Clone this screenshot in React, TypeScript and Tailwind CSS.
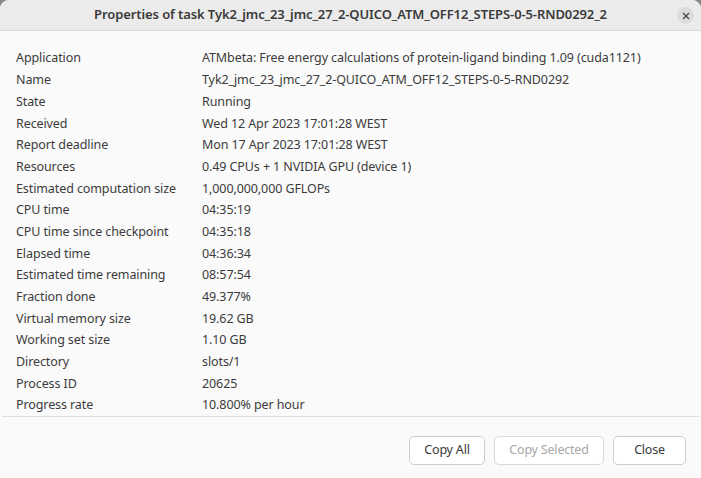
import React from "react";

const rows: [string, string][] = [
  ["Application", "ATMbeta: Free energy calculations of protein-ligand binding 1.09 (cuda1121)"],
  ["Name", "Tyk2_jmc_23_jmc_27_2-QUICO_ATM_OFF12_STEPS-0-5-RND0292"],
  ["State", "Running"],
  ["Received", "Wed 12 Apr 2023 17:01:28 WEST"],
  ["Report deadline", "Mon 17 Apr 2023 17:01:28 WEST"],
  ["Resources", "0.49 CPUs + 1 NVIDIA GPU (device 1)"],
  ["Estimated computation size", "1,000,000,000 GFLOPs"],
  ["CPU time", "04:35:19"],
  ["CPU time since checkpoint", "04:35:18"],
  ["Elapsed time", "04:36:34"],
  ["Estimated time remaining", "08:57:54"],
  ["Fraction done", "49.377%"],
  ["Virtual memory size", "19.62 GB"],
  ["Working set size", "1.10 GB"],
  ["Directory", "slots/1"],
  ["Process ID", "20625"],
  ["Progress rate", "10.800% per hour"],
];

export default function App() {
  return (
    <div
      className="w-[701px] h-[478px] bg-[#8a8a8a] text-[#3c3c3c]"
      style={{ fontFamily: '"Noto Sans", "Open Sans", sans-serif' }}
    >
      <div className="w-full h-full flex flex-col bg-[#fafafa] rounded-t-[9px] overflow-hidden">
        <div className="h-[31px] shrink-0 bg-[#ebebeb] border-b border-[#dadada] flex items-center relative">
          <div className="flex-1 text-center text-[13px] font-semibold text-[#3a3a3a] tracking-[-0.1px]">
            Properties of task Tyk2_jmc_23_jmc_27_2-QUICO_ATM_OFF12_STEPS-0-5-RND0292_2
          </div>
          <div className="absolute right-[7px] top-[7px] w-[17px] h-[17px] rounded-full bg-[#dcdcdc] flex items-center justify-center">
            <svg width="8" height="8" viewBox="0 0 8 8">
              <path d="M1 1L7 7M7 1L1 7" stroke="#444" strokeWidth="1.3" />
            </svg>
          </div>
        </div>
        <div className="pt-[17px] px-[16px] h-[385px] shrink-0">
          {rows.map(([k, v]) => (
            <div key={k} className="flex h-[21.7px] items-center text-[12.5px] tracking-[-0.1px]">
              <div className="w-[186px] shrink-0">{k}</div>
              <div>{v}</div>
            </div>
          ))}
        </div>
        <div className="mx-[2px] border-t border-[#dedede]" />
        <div className="flex justify-end gap-[9px] pr-[15px] pt-[19px]">
          <button className="h-[29px] w-[76px] rounded-[5px] border border-[#cdcdcd] bg-white text-[12.5px] text-[#3a3a3a] tracking-[-0.2px]">
            Copy All
          </button>
          <button className="h-[29px] w-[110px] rounded-[5px] border border-[#dadada] bg-white text-[12.5px] text-[#a8a8a8] tracking-[-0.2px]">
            Copy Selected
          </button>
          <button className="h-[29px] w-[73px] rounded-[5px] border border-[#cdcdcd] bg-white text-[12.5px] text-[#3a3a3a] tracking-[-0.2px]">
            Close
          </button>
        </div>
      </div>
    </div>
  );
}
